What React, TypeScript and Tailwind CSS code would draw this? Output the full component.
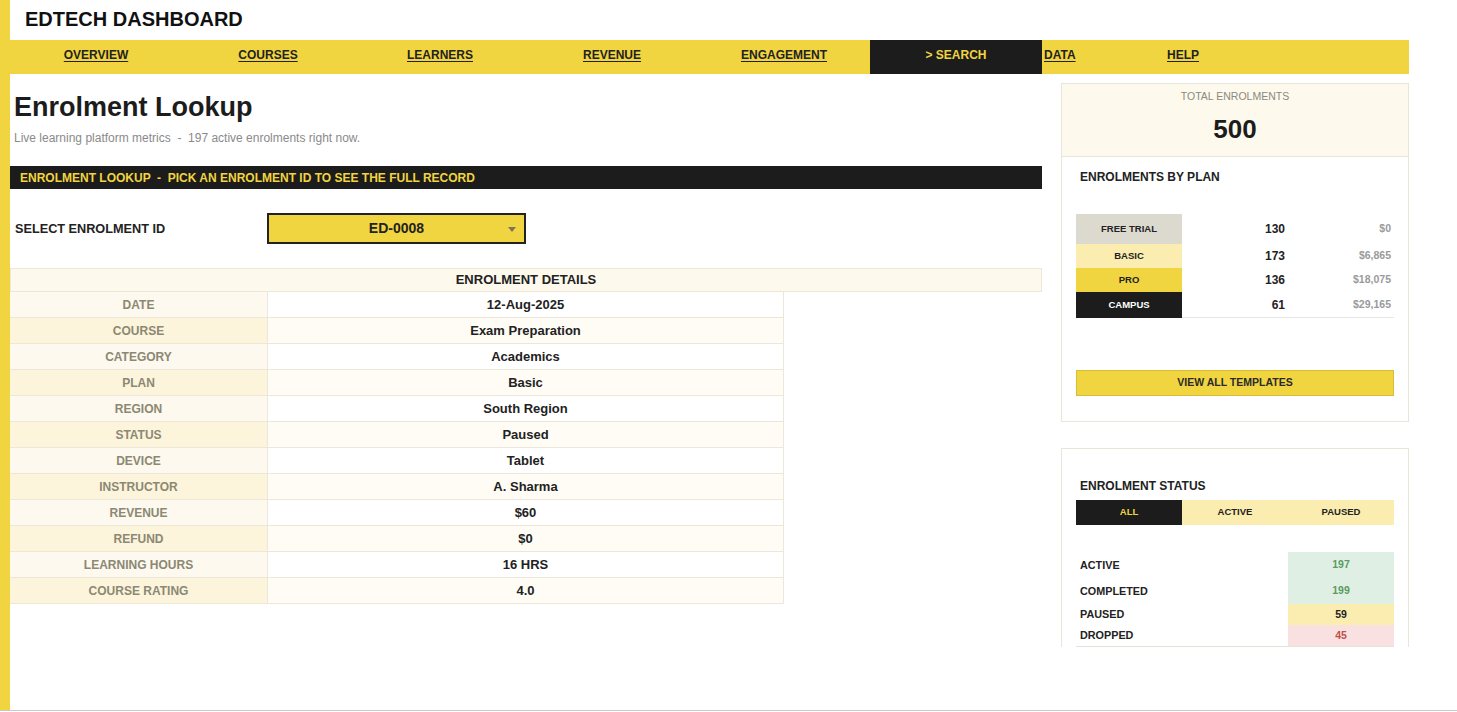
import React from "react";

const Y = "bg-[#f1d540]";

const navItems = ["OVERVIEW", "COURSES", "LEARNERS", "REVENUE", "ENGAGEMENT"];

const details: [string, string][] = [
  ["DATE", "12-Aug-2025"],
  ["COURSE", "Exam Preparation"],
  ["CATEGORY", "Academics"],
  ["PLAN", "Basic"],
  ["REGION", "South Region"],
  ["STATUS", "Paused"],
  ["DEVICE", "Tablet"],
  ["INSTRUCTOR", "A. Sharma"],
  ["REVENUE", "$60"],
  ["REFUND", "$0"],
  ["LEARNING HOURS", "16 HRS"],
  ["COURSE RATING", "4.0"],
];

export default function App() {
  return (
    <div className="w-[1457px] h-[712px] bg-white font-['Liberation_Sans',Arial,sans-serif] text-[#1c1c1c] overflow-hidden">
      <div className="flex h-[711px] border-b border-[#c9c9c9]">
        <div className={`w-[10px] shrink-0 ${Y}`} />
        <div className="flex flex-col w-[1447px]">
          {/* Header */}
          <div className="h-[40px] pl-[15px] pt-[7px]">
            <div className="text-[20px] leading-[24px] font-bold text-[#111]">EDTECH DASHBOARD</div>
          </div>
          {/* Nav */}
          <div className={`flex h-[34px] w-[1399px] ${Y} items-center text-[12px] font-bold text-[#222]`}>
            {navItems.map((n) => (
              <div key={n} className="w-[172px] text-center pb-[5px]">
                <span className="underline underline-offset-2">{n}</span>
              </div>
            ))}
            <div className="w-[172px] h-full bg-[#1c1c1c] text-[#f1d540] flex items-center justify-center pb-[5px]">
              &gt; SEARCH
            </div>
            <div className="w-[125px] pl-[2px] pb-[5px]">
              <span className="underline underline-offset-2">DATA</span>
            </div>
            <div className="pb-[5px]">
              <span className="underline underline-offset-2">HELP</span>
            </div>
          </div>
          {/* Body */}
          <div className="flex gap-[19px]">
            {/* Left */}
            <div className="w-[1032px] flex flex-col">
              <div className="mt-[17px] pl-[4px] h-[32px] text-[27px] leading-[32px] font-bold text-[#1c1c1c]">
                Enrolment Lookup
              </div>
              <div className="mt-[7px] pl-[4px] h-[16px] text-[12px] leading-[16px] text-[#8a8a8a] whitespace-pre">
                Live learning platform metrics  -  197 active enrolments right now.
              </div>
              <div className="mt-[20px] h-[23px] bg-[#1c1c1c] pl-[10px] flex items-center text-[12px] font-bold text-[#f1d540] whitespace-pre">
                ENROLMENT LOOKUP  -  PICK AN ENROLMENT ID TO SEE THE FULL RECORD
              </div>
              <div className="mt-[24px] h-[31px] flex items-center">
                <div className="w-[257px] pl-[5px] pt-[3px] text-[12.7px] font-bold text-[#222]">SELECT ENROLMENT ID</div>
                <div className={`relative w-[259px] h-[31px] ${Y} border-2 border-[#222] flex items-center justify-center`}>
                  <span className="text-[14px] font-bold text-[#222]">ED-0008</span>
                  <svg className="absolute right-[8px] top-[12px]" width="8" height="5" viewBox="0 0 8 5">
                    <path d="M0 0 L8 0 L4 5 Z" fill="#7a7460" />
                  </svg>
                </div>
              </div>
              <div className="mt-[24px] h-[24px] bg-[#fdf9ec] border border-[#ece7d8] flex items-center justify-center text-[13px] font-bold text-[#222]">
                ENROLMENT DETAILS
              </div>
              <div className="w-[774px] flex flex-col">
                {details.map(([k, v], i) => {
                  const even = i % 2 === 1;
                  return (
                    <div key={k} className="flex h-[26px] border-b border-[#ece7d8]">
                      <div
                        className={`w-[258px] flex items-center justify-center text-[12px] font-bold text-[#8b8873] border-r border-[#ece7d8] ${
                          even ? "bg-[#fdf4dc]" : "bg-[#fdf9ee]"
                        }`}
                      >
                        {k}
                      </div>
                      <div
                        className={`flex-1 flex items-center justify-center text-[13px] font-bold text-[#222] border-r border-[#ece7d8] ${
                          even ? "bg-[#fefcf5]" : "bg-white"
                        }`}
                      >
                        {v}
                      </div>
                    </div>
                  );
                })}
              </div>
            </div>
            {/* Right */}
            <div className="w-[348px] flex flex-col">
              <div className="mt-[9px] h-[74px] bg-[#fdf9ec] border border-[#e9e5d8] flex flex-col items-center">
                <div className="mt-[5px] text-[10.5px] leading-[14px] text-[#8a8a80]">TOTAL ENROLMENTS</div>
                <div className="mt-[11px] text-[26px] leading-[30px] font-bold text-[#1c1c1c]">500</div>
              </div>
              <div className="h-[265px] border-x border-b border-[#e9e5d8] pl-[14px] pt-[12px] flex flex-col">
                <div className="pl-[4px] h-[16px] text-[12px] leading-[16px] font-bold text-[#222]">ENROLMENTS BY PLAN</div>
                <div className="mt-[29px] w-[318px] flex flex-col">
                  {[
                    ["FREE TRIAL", "130", "$0", "bg-[#dcd9cf] text-[#222]", "h-[30px]"],
                    ["BASIC", "173", "$6,865", "bg-[#fbedb0] text-[#222]", "h-[24px]"],
                    ["PRO", "136", "$18,075", "bg-[#f1d540] text-[#222]", "h-[24px]"],
                    ["CAMPUS", "61", "$29,165", "bg-[#1c1c1c] text-white", "h-[26px]"],
                  ].map(([name, c, amt, cls, h], i) => (
                    <div key={name} className={`flex ${h}`}>
                      <div className={`w-[106px] flex items-center justify-center text-[9.5px] font-bold ${cls}`}>{name}</div>
                      <div
                        className={`flex-1 flex items-center ${i === 3 ? "border-b border-[#e6e6e6]" : ""}`}
                      >
                        <div className="w-[103px] text-right text-[12px] font-bold text-[#222]">{c}</div>
                        <div className="w-[106px] text-right text-[10.5px] font-bold text-[#9a9a9a]">{amt}</div>
                      </div>
                    </div>
                  ))}
                </div>
                <div className={`mt-[52px] w-[318px] h-[26px] ${Y} border border-[#d9bd34] flex items-center justify-center text-[10.5px] font-bold text-[#2a2a2a]`}>
                  VIEW ALL TEMPLATES
                </div>
              </div>
              <div className="mt-[26px] h-[199px] border-x border-t border-[#e9e5d8] pl-[14px] pt-[29px] flex flex-col">
                <div className="pl-[4px] h-[16px] text-[12px] leading-[16px] font-bold text-[#222]">ENROLMENT STATUS</div>
                <div className="mt-[6px] w-[318px] h-[25px] flex text-[9.5px] font-bold">
                  <div className="w-[106px] bg-[#1c1c1c] text-[#f1d540] flex items-center justify-center">ALL</div>
                  <div className="w-[106px] bg-[#fbedb0] text-[#222] flex items-center justify-center">ACTIVE</div>
                  <div className="w-[106px] bg-[#fbedb0] text-[#222] flex items-center justify-center">PAUSED</div>
                </div>
                <div className="mt-[27px] w-[318px] flex flex-col border-b border-[#e6e2d8]">
                  {[
                    ["ACTIVE", "197", "bg-[#e0efe3] text-[#5b9b63]", "h-[26px]"],
                    ["COMPLETED", "199", "bg-[#e0efe3] text-[#5b9b63]", "h-[26px]"],
                    ["PAUSED", "59", "bg-[#fbedb0] text-[#222]", "h-[21px]"],
                    ["DROPPED", "45", "bg-[#fae1e1] text-[#c0504d]", "h-[21px]"],
                  ].map(([k, v, cls, h]) => (
                    <div key={k} className={`flex ${h}`}>
                      <div className="w-[212px] pl-[4px] flex items-center text-[10.8px] font-bold text-[#222]">{k}</div>
                      <div className={`w-[106px] flex items-center justify-center text-[10.5px] font-bold ${cls}`}>{v}</div>
                    </div>
                  ))}
                </div>
              </div>
            </div>
          </div>
        </div>
      </div>
    </div>
  );
}
